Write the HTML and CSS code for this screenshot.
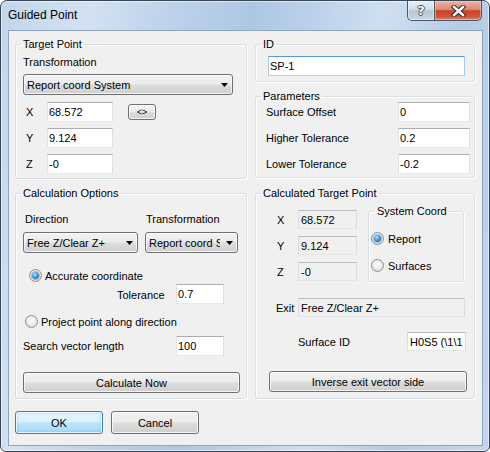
FILE: index.html
```html
<!DOCTYPE html>
<html>
<head>
<meta charset="utf-8">
<title>Guided Point</title>
<link rel="stylesheet" href="styles.css">
</head>
<body>
<div class="window">
  <div class="titlebar">
    <span class="title">Guided Point</span>
    <div class="caption">
      <div class="cap cap-help"><span class="help-glyph">?</span></div>
      <div class="cap cap-close">
        <svg width="15" height="12" viewBox="0 0 15 12">
          <path d="M3 2 L12 10 M12 2 L3 10" stroke="#3a3030" stroke-width="4.6" stroke-linecap="square" fill="none"/>
          <path d="M3 2 L12 10 M12 2 L3 10" stroke="#ffffff" stroke-width="2.4" stroke-linecap="square" fill="none"/>
        </svg>
      </div>
    </div>
  </div>
  <div class="client">
    <div class="columns">
      <div class="col col-left">
        <fieldset class="group g-target">
          <legend>Target Point</legend>
          <div class="tp-body">
            <div class="lbl tp-trans">Transformation</div>
            <div class="combo combo-wide"><span class="combo-text">Report coord System</span><svg class="arrow" width="7" height="4" viewBox="0 0 7 4"><polygon points="0,0 7,0 3.5,4" fill="#000"/></svg></div>
            <div class="xyz">
              <div class="xyz-row"><span class="axis">X</span><div class="tb tb-xyz">68.572</div><div class="btn btn-swap">&lt;&gt;</div></div>
              <div class="xyz-row"><span class="axis">Y</span><div class="tb tb-xyz">9.124</div></div>
              <div class="xyz-row"><span class="axis">Z</span><div class="tb tb-xyz">-0</div></div>
            </div>
          </div>
        </fieldset>
        <fieldset class="group g-calc">
          <legend>Calculation Options</legend>
          <div class="co-body">
            <div class="co-labels"><span class="l-dir">Direction</span><span class="l-trans">Transformation</span></div>
            <div class="co-combos">
              <div class="combo"><span class="combo-text">Free Z/Clear Z+</span><svg class="arrow" width="7" height="4" viewBox="0 0 7 4"><polygon points="0,0 7,0 3.5,4" fill="#000"/></svg></div>
              <div class="combo"><span class="combo-text">Report coord System</span><svg class="arrow" width="7" height="4" viewBox="0 0 7 4"><polygon points="0,0 7,0 3.5,4" fill="#000"/></svg></div>
            </div>
            <div class="radio-row r-accurate"><span class="radio on"></span><span class="rtext">Accurate coordinate</span></div>
            <div class="tol-row"><span class="tol-lbl">Tolerance</span><div class="tb tb-small">0.7</div></div>
            <div class="radio-row r-project"><span class="radio"></span><span class="rtext">Project point along direction</span></div>
            <div class="search-row"><span class="search-lbl">Search vector length</span><div class="tb tb-small">100</div></div>
            <div class="btn btn-calc">Calculate Now</div>
          </div>
        </fieldset>
      </div>
      <div class="col col-right">
        <fieldset class="group g-id">
          <legend>ID</legend>
          <div class="id-body"><div class="tb tb-id">SP-1</div></div>
        </fieldset>
        <fieldset class="group g-params">
          <legend>Parameters</legend>
          <div class="params">
            <div class="prow"><span>Surface Offset</span><div class="tb tb-param">0</div></div>
            <div class="prow"><span>Higher Tolerance</span><div class="tb tb-param">0.2</div></div>
            <div class="prow"><span>Lower Tolerance</span><div class="tb tb-param">-0.2</div></div>
          </div>
        </fieldset>
        <fieldset class="group g-ctp">
          <legend>Calculated Target Point</legend>
          <div class="ctp-body">
            <div class="ctp-top">
              <div class="ctp-xyz">
                <div class="ctp-row"><span class="axis">X</span><div class="tb ro ro-xyz">68.572</div></div>
                <div class="ctp-row"><span class="axis">Y</span><div class="tb ro ro-xyz">9.124</div></div>
                <div class="ctp-row"><span class="axis">Z</span><div class="tb ro ro-xyz">-0</div></div>
              </div>
              <fieldset class="group sys">
                <legend>System Coord</legend>
                <div class="sys-body">
                  <div class="radio-row r-report"><span class="radio on"></span><span class="rtext2">Report</span></div>
                  <div class="radio-row r-surf"><span class="radio"></span><span class="rtext2">Surfaces</span></div>
                </div>
              </fieldset>
            </div>
            <div class="exit-row"><span class="exit-lbl">Exit</span><div class="tb ro ro-exit">Free Z/Clear Z+</div></div>
            <div class="sid-row"><span class="sid-lbl">Surface ID</span><div class="tb ro ro-sid">H0S5 (\1\1</div></div>
            <div class="btn btn-inverse">Inverse exit vector side</div>
          </div>
        </fieldset>
      </div>
    </div>
    <div class="actions">
      <div class="btn btn-ok">OK</div>
      <div class="btn btn-cancel">Cancel</div>
    </div>
  </div>
</div>
</body>
</html>
```
FILE: styles.css
```css
* { box-sizing: border-box; }
html, body { margin: 0; padding: 0; }
body {
  width: 490px;
  height: 452px;
  overflow: hidden;
  background: #ffffff;
  font-family: "Liberation Sans", Arial, sans-serif;
  font-size: 11px;
  color: #000;
}

.window {
  width: 490px;
  height: 452px;
  border: 1px solid #3a4552;
  border-radius: 7px 7px 6px 6px;
  overflow: hidden;
  display: flex;
  flex-direction: column;
  background: linear-gradient(100deg, #c1d5eb 0%, #d3e2f2 16%, #c2d6ec 26%, #adc7e3 45%, #bfd4eb 58%, #cfdff1 68%, #b5cce6 82%, #c3d6ec 100%);
  box-shadow: inset 0 0 0 1px rgba(255,255,255,0.55);
}

.titlebar {
  height: 29px;
  flex: none;
  display: flex;
  align-items: flex-start;
}
.title {
  font-size: 12px;
  line-height: 15px;
  margin: 7px 0 0 7px;
  color: #000;
}
.caption {
  margin-left: auto;
  margin-right: 7px;
  display: flex;
}
.cap {
  height: 20px;
  border: 1px solid #4a5869;
  border-top: none;
  display: flex;
  align-items: center;
  justify-content: center;
}
.cap-help {
  width: 27px;
  border-right: none;
  border-radius: 0 0 0 5px;
  background: linear-gradient(#e6edf5 0%, #d3dde9 45%, #b8c6d7 52%, #c9d6e4 100%);
  box-shadow: inset 0 0 0 1px rgba(255,255,255,0.5);
}
.help-glyph {
  font-family: "DejaVu Sans", sans-serif;
  font-weight: bold;
  font-size: 13px;
  line-height: 14px;
  color: #f4f6f8;
  text-shadow: 1px 0 0 #4c5460, -1px 0 0 #4c5460, 0 1px 0 #4c5460, 0 -1px 0 #4c5460;
}
.cap-close {
  width: 48px;
  border-radius: 0 0 5px 0;
  background: linear-gradient(#ebb4a6 0%, #dd8a76 44%, #c8442b 52%, #cf563c 82%, #e08a6c 100%);
  box-shadow: inset 0 0 0 1px rgba(255,220,210,0.45);
}

.client {
  flex: 1;
  margin: 0 6px 5px 7px;
  background: #f0f0f0;
  border: 1px solid #8ea3bd;
  padding: 6px 7px 0 6px;
}

.columns {
  display: flex;
  gap: 8px;
}
.col-left {
  width: 232px;
  display: flex;
  flex-direction: column;
  gap: 7px;
}
.col-right {
  width: 220px;
  display: flex;
  flex-direction: column;
}

fieldset.group {
  margin: 0;
  padding: 0;
  min-width: 0;
  border: 1px solid #d5dfe5;
  border-radius: 3px;
  box-shadow: inset 1px 1px 0 #ffffff, 1px 1px 0 #ffffff;
}
fieldset.group > legend {
  margin-left: 5px;
  padding: 0 2px;
  font-size: 11px;
  line-height: 14px;
}

fieldset.g-target { height: 142px; }
fieldset.g-calc { height: 213px; }
fieldset.g-id { height: 45px; margin-bottom: 7px; }
fieldset.g-params { height: 89px; margin-bottom: 8px; }
fieldset.g-ctp { height: 213px; }

.lbl { line-height: 13px; }

/* text boxes */
.tb {
  height: 20px;
  background: #ffffff;
  border: 1px solid;
  border-color: #abadb3 #dbdfe6 #e3e9ef #e2e3ea;
  padding: 0 1px;
  display: flex;
  align-items: center;
  white-space: nowrap;
  overflow: hidden;
  flex: none;
}
.ro {
  height: 19px;
  background: #f0f0f0;
  border-color: #b9bcc1 #d9dce0 #e2e5e8 #d9dce0;
  padding: 0 2px;
}

/* buttons */
.btn {
  display: flex;
  align-items: center;
  justify-content: center;
  border: 1px solid #707070;
  border-radius: 3px;
  background: linear-gradient(#f2f2f2 0%, #ebebeb 49%, #dddddd 51%, #cfcfcf 100%);
  box-shadow: inset 0 0 0 1px rgba(255,255,255,0.75);
  white-space: nowrap;
  flex: none;
}

/* combos */
.combo {
  height: 21px;
  display: flex;
  align-items: center;
  border: 1px solid #707070;
  border-radius: 3px;
  background: linear-gradient(#f2f2f2 0%, #ebebeb 49%, #dddddd 51%, #cfcfcf 100%);
  box-shadow: inset 0 0 0 1px rgba(255,255,255,0.75);
  padding: 0 4px 0 3px;
}
.combo-text {
  flex: 1;
  overflow: hidden;
  white-space: nowrap;
}
.arrow {
  flex: none;
  margin-left: 6px;
}

/* radios */
.radio-row {
  display: flex;
  align-items: center;
  height: 13px;
}
.radio {
  width: 13px;
  height: 13px;
  flex: none;
  border-radius: 50%;
  border: 1px solid #8c8e90;
  background: radial-gradient(circle at 50% 40%, #ffffff 0%, #f1f1f1 35%, #d2d3d4 100%);
  position: relative;
}
.radio.on::after {
  content: "";
  position: absolute;
  left: 2px;
  top: 2px;
  width: 7px;
  height: 7px;
  border-radius: 50%;
  background: radial-gradient(circle at 40% 35%, #b5e4ff 0%, #4b9fdc 40%, #17599a 100%);
  box-shadow: 0 0 0 1px rgba(40,90,140,0.35);
}

/* Target point */
.tp-body { padding-left: 7px; }
.tp-trans { margin-top: 5px; }
.combo-wide { margin-top: 5px; width: 210px; }
.xyz {
  margin-top: 7px;
  padding-left: 3px;
  display: flex;
  flex-direction: column;
  gap: 6px;
}
.xyz-row {
  display: flex;
  align-items: center;
  height: 20px;
}
.axis { width: 21px; flex: none; }
.tb-xyz { width: 66px; }
.btn-swap {
  margin-left: 15px;
  width: 28px;
  height: 16px;
  font-size: 9px;
}

/* Calculation options */
.co-body { padding-left: 7px; }
.co-labels {
  margin-top: 13px;
  display: grid;
  grid-template-columns: 122px 93px;
  line-height: 13px;
}
.l-dir { padding-left: 2px; }
.l-trans { padding-left: 1px; }
.co-combos {
  margin-top: 6px;
  display: grid;
  grid-template-columns: 115px 93px;
  column-gap: 7px;
}
.rtext { margin-left: 3px; }
.r-accurate { margin-top: 16px; padding-left: 6px; }
.tol-row {
  margin-top: 2px;
  display: flex;
  align-items: center;
  padding-left: 94px;
}
.tol-lbl { width: 59px; flex: none; padding-top: 2px; }
.tb-small { width: 48px; }
.r-project { margin-top: 11px; padding-left: 2px; }
.search-row {
  margin-top: 8px;
  display: flex;
  align-items: center;
}
.search-lbl { width: 153px; flex: none; }
.btn-calc {
  margin-top: 16px;
  width: 217px;
  height: 21px;
}

/* ID */
.id-body { padding-left: 12px; margin-top: 5px; }
.tb-id {
  width: 197px;
  border-color: #5b9bd5 #a9cbe9 #b7d7f0 #a9cbe9;
}

/* Parameters */
.params {
  margin-top: -1px;
  padding: 0 4px 0 10px;
  display: flex;
  flex-direction: column;
  gap: 6px;
}
.prow {
  display: flex;
  align-items: center;
  justify-content: space-between;
  height: 20px;
}
.tb-param { width: 72px; }

/* Calculated target point */
.ctp-top {
  display: flex;
  align-items: flex-start;
}
.ctp-xyz {
  margin-top: 10px;
  padding-left: 21px;
  display: flex;
  flex-direction: column;
  gap: 7px;
}
.ctp-row {
  display: flex;
  align-items: center;
  height: 19px;
}
.ro-xyz { width: 59px; }
fieldset.sys {
  margin-left: 11px;
  margin-top: 4px;
  width: 96px;
  height: 78px;
}
fieldset.sys > legend { margin-left: 6px; }
.sys-body { padding-left: 2px; }
.r-report { margin-top: 14px; }
.r-surf { margin-top: 14px; }
.rtext2 { margin-left: 4px; }
.exit-row {
  margin-top: 16px;
  padding-left: 20px;
  display: flex;
  align-items: center;
}
.exit-lbl { width: 22px; flex: none; }
.ro-exit { width: 167px; }
.sid-row {
  margin-top: 15px;
  padding-left: 42px;
  display: flex;
  align-items: center;
}
.sid-lbl { width: 109px; flex: none; }
.ro-sid { width: 59px; background: #fcfcfc; }
.btn-inverse {
  margin-top: 20px;
  margin-left: 13px;
  width: 198px;
  height: 21px;
}

/* dialog buttons */
.actions {
  margin-top: 12px;
  display: flex;
  gap: 8px;
}
.btn-ok, .btn-cancel {
  width: 88px;
  height: 23px;
}
.btn-ok {
  border-color: #3c7fb1;
  background: linear-gradient(#eaf6fd 0%, #d9f0fc 49%, #bee6fd 51%, #a7d9f5 100%);
  box-shadow: inset 0 0 0 1px rgba(255,255,255,0.8), inset 0 0 3px 1px rgba(72,180,230,0.45);
}
```
